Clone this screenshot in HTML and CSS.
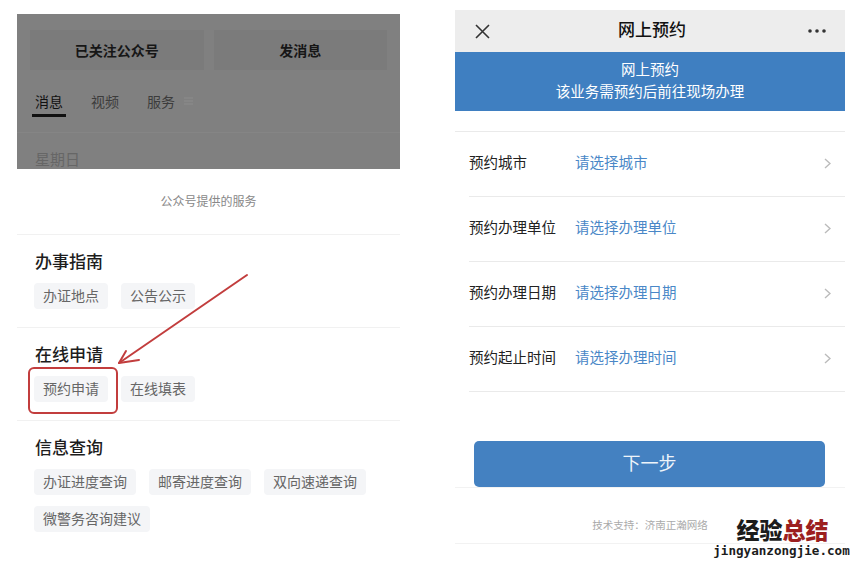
FILE: index.html
```html
<!DOCTYPE html>
<html lang="zh-CN">
<head>
  <meta charset="UTF-8">
  <meta name="viewport" content="width=device-width, initial-scale=1.0">
  <title>网上预约</title>
  <link rel="stylesheet" href="styles.css">
</head>
<body>
  <div class="page">
    <div class="phone phone-left">
      <div class="dim">
        <div class="follow-bar">
          <div class="follow-btn">已关注公众号</div>
          <div class="follow-btn">发消息</div>
        </div>
        <div class="tabs">
          <span class="tab active">消息</span>
          <span class="tab">视频</span>
          <span class="tab">服务</span>
          <svg class="tab-menu" width="9" height="8" viewBox="0 0 9 8">
            <path d="M0 1h9M0 4h9M0 7h9" stroke="#8c8c8c" stroke-width="1"/>
          </svg>
        </div>
        <div class="day">星期日</div>
      </div>

      <div class="sheet">
        <div class="sheet-title">公众号提供的服务</div>

        <div class="group">
          <h3>办事指南</h3>
          <div class="tags">
            <span class="tag">办证地点</span>
            <span class="tag">公告公示</span>
          </div>
        </div>

        <div class="group">
          <h3>在线申请</h3>
          <div class="tags">
            <span class="tag marked">预约申请</span>
            <span class="tag">在线填表</span>
          </div>
        </div>

        <div class="group">
          <h3>信息查询</h3>
          <div class="tags">
            <span class="tag">办证进度查询</span>
            <span class="tag">邮寄进度查询</span>
            <span class="tag">双向速递查询</span>
            <span class="tag">微警务咨询建议</span>
          </div>
        </div>
      </div>
    </div>

    <div class="phone phone-right">
      <div class="topbar">
        <svg class="close" width="15" height="15" viewBox="0 0 15 15">
          <path d="M1 1L14 14M14 1L1 14" stroke="#333" stroke-width="1.6"/>
        </svg>
        <span class="topbar-title">网上预约</span>
        <svg class="more" width="18" height="4" viewBox="0 0 18 4">
          <circle cx="2" cy="2" r="1.8" fill="#333"/>
          <circle cx="9" cy="2" r="1.8" fill="#333"/>
          <circle cx="16" cy="2" r="1.8" fill="#333"/>
        </svg>
      </div>
      <div class="banner">
        <div>网上预约</div>
        <div>该业务需预约后前往现场办理</div>
      </div>

      <div class="form">
        <div class="row">
          <span class="label">预约城市</span>
          <span class="value">请选择城市</span>
          <svg class="chev" width="7" height="11" viewBox="0 0 7 11"><path d="M1 1l5 4.5L1 10" fill="none" stroke="#bbb" stroke-width="1.4"/></svg>
        </div>
        <div class="row">
          <span class="label">预约办理单位</span>
          <span class="value">请选择办理单位</span>
          <svg class="chev" width="7" height="11" viewBox="0 0 7 11"><path d="M1 1l5 4.5L1 10" fill="none" stroke="#bbb" stroke-width="1.4"/></svg>
        </div>
        <div class="row">
          <span class="label">预约办理日期</span>
          <span class="value">请选择办理日期</span>
          <svg class="chev" width="7" height="11" viewBox="0 0 7 11"><path d="M1 1l5 4.5L1 10" fill="none" stroke="#bbb" stroke-width="1.4"/></svg>
        </div>
        <div class="row">
          <span class="label">预约起止时间</span>
          <span class="value">请选择办理时间</span>
          <svg class="chev" width="7" height="11" viewBox="0 0 7 11"><path d="M1 1l5 4.5L1 10" fill="none" stroke="#bbb" stroke-width="1.4"/></svg>
        </div>
      </div>

      <div class="actions">
        <button class="next">下一步</button>
      </div>
      <div class="support">技术支持：济南正瀚网络</div>
    </div>
  </div>

  <!-- annotation arrow drawn over the screenshot -->
  <svg class="arrow" width="864" height="569" viewBox="0 0 864 569">
    <g stroke="#c23d3d" stroke-width="2" fill="none" stroke-linecap="round">
      <path d="M247 275L119 363"/>
      <path d="M119 363L126 351M119 363L139 360"/>
    </g>
  </svg>

  <div class="watermark">
    <div class="wm-title">经验<span class="wm-red">总结</span></div>
    <div class="wm-url">jingyanzongjie.com</div>
  </div>
</body>
</html>
```

FILE: styles.css
```css
body {
  margin: 0;
  background-color: #fff;
  font-family: "Noto Sans CJK SC", "Noto Sans", sans-serif;
  color: #1a1a1a;
  position: relative;
  width: 864px;
  height: 569px;
  overflow: hidden;
}
.page {
  display: flex;
  gap: 55px;
  padding-left: 17px;
}

/* left phone */
.phone-left {
  width: 383px;
  margin-top: 14px;
}
.dim {
  height: 155px;
  background-color: #808080;
  overflow: hidden;
}
.follow-bar {
  display: flex;
  gap: 10px;
  padding: 16px 13px 0;
}
.follow-btn {
  flex: 1;
  height: 40px;
  background-color: #7b7b7b;
  display: flex;
  align-items: center;
  justify-content: center;
  font-size: 14px;
  font-weight: 700;
  color: #161616;
}
.tabs {
  display: flex;
  align-items: flex-start;
  gap: 22px;
  height: 62px;
  padding: 0 15px;
  border-bottom: 1px solid #858585;
}
.tab {
  margin-top: 21px;
  padding: 0 3px 3px;
  font-size: 14px;
  line-height: 20px;
  color: #3c3c3c;
  border-bottom: 3px solid transparent;
}
.tab.active {
  color: #111;
  border-bottom-color: #111;
}
.tab-menu {
  margin: 27px 0 0 -16px;
}
.day {
  padding: 16px 0 0 18px;
  font-size: 15px;
  line-height: 20px;
  color: #666;
}

.sheet {
  padding-top: 24px;
}
.sheet-title {
  text-align: center;
  font-size: 12px;
  line-height: 16px;
  color: #888;
  margin-bottom: 25px;
}
.group {
  border-top: 1px solid #f1f1f1;
  padding: 16px 16px 18px 17px;
}
.group h3 {
  margin: 0 0 12px 1px;
  font-size: 17px;
  line-height: 20px;
  font-weight: 500;
  color: #1d1d1d;
}
.tags {
  display: flex;
  flex-wrap: wrap;
  gap: 11px 13px;
}
.tag {
  height: 26px;
  line-height: 25px;
  padding: 0 9px;
  font-size: 14px;
  color: #666;
  background-color: #f4f5f7;
  border-radius: 4px;
}
.tag.marked {
  position: relative;
}
.tag.marked::after {
  content: "";
  position: absolute;
  left: -6px;
  top: -9px;
  right: -10px;
  bottom: -12px;
  border: 2px solid #c23d3d;
  border-radius: 6px;
}

/* right phone */
.phone-right {
  width: 390px;
  margin-top: 10px;
}
.topbar {
  height: 42px;
  background-color: #ededed;
  display: flex;
  align-items: center;
  justify-content: space-between;
  padding: 0 19px 0 20px;
}
.topbar-title {
  font-size: 17px;
  font-weight: 500;
  color: #111;
  margin-left: 6px;
  padding-bottom: 5px;
}
.banner {
  background-color: #3f7fc1;
  color: #fff;
  text-align: center;
  font-size: 14.5px;
  line-height: 22px;
  padding: 6px 0 9px;
  height: 44px;
}
.form {
  margin-top: 20px;
  border-top: 1px solid #eaeaea;
}
.row {
  display: flex;
  align-items: center;
  height: 59px;
  padding: 0 14px 5px 0;
  margin-left: 14px;
  border-bottom: 1px solid #eaeaea;
  font-size: 14.5px;
}
.chev {
  margin-top: 4px;
}
.label {
  width: 106px;
  color: #222;
}
.value {
  flex: 1;
  color: #4a87c7;
}
.actions {
  padding: 49px 20px 0 19px;
  border-bottom: 1px solid #f2f2f2;
}
.next {
  display: block;
  width: 100%;
  height: 46px;
  padding: 0 0 4px;
  border: none;
  border-radius: 5px;
  background-color: #4481c1;
  color: #eef4fa;
  font-family: inherit;
  font-size: 18px;
}
.support {
  text-align: center;
  font-size: 10.5px;
  line-height: 14px;
  color: #aaa;
  padding: 30px 0 11px;
  border-bottom: 1px solid #f2f2f2;
}

/* overlays */
.arrow {
  position: absolute;
  left: 0;
  top: 0;
  pointer-events: none;
}
.watermark {
  position: absolute;
  left: 713px;
  top: 516px;
  width: 137px;
  display: flex;
  flex-direction: column;
  align-items: center;
}
.wm-title {
  font-size: 23px;
  line-height: 26px;
  font-weight: 900;
  color: #1c1c1c;
  margin-left: 2px;
}
.wm-red {
  color: #9c1f1f;
}
.wm-url {
  font-family: "DejaVu Sans Mono", monospace;
  font-weight: 700;
  font-size: 12.6px;
  line-height: 16px;
  color: #1c1c1c;
  margin-top: 1px;
}
```
